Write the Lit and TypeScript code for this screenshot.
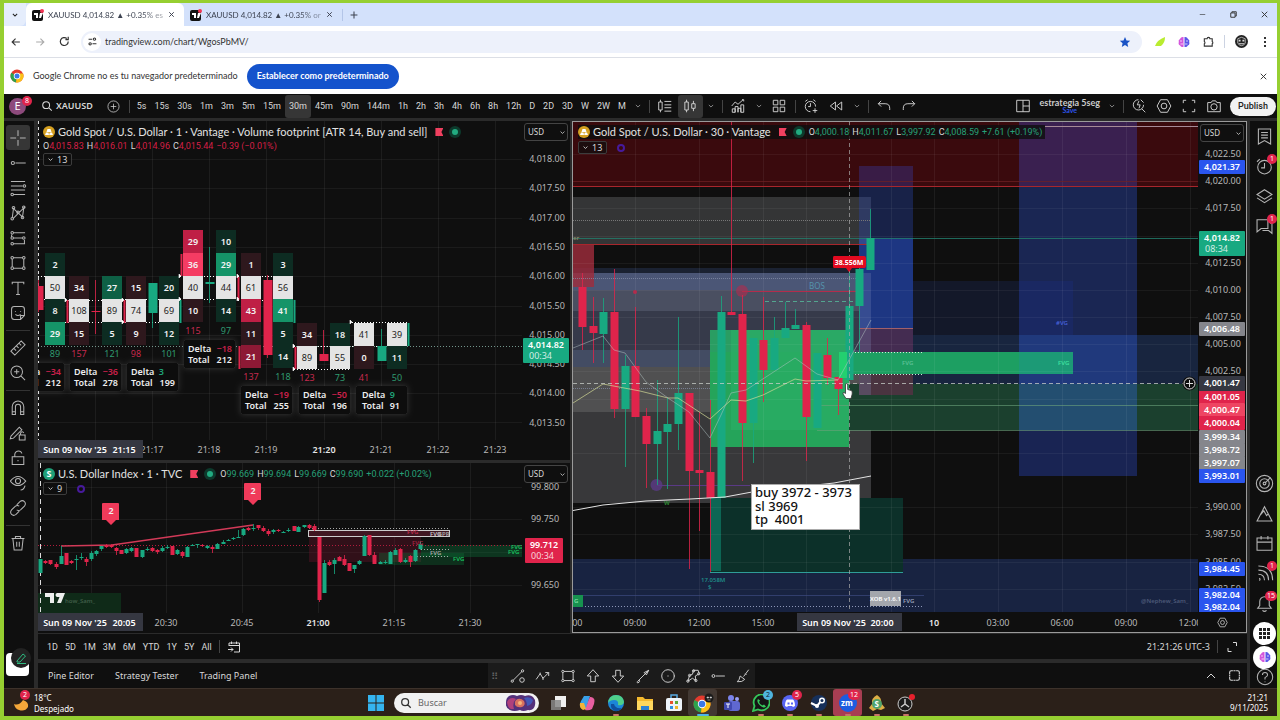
import { LitElement, html, svg, css } from "lit";
import { customElement, state } from "lit/decorators.js";
import { classMap } from "lit/directives/class-map.js";

/* ---------- icons, drawn on a 28-unit grid ---------- */
const P: Record<string, string> = {
  down: "M8 11l6 6 6-6",
  up: "M6 18l8-8 8 8",
  close: "M7 7l14 14M21 7L7 21",
  plus: "M14 6v16M6 14h16",
  back: "M23 14H6M13 6l-8 8 8 8",
  forward: "M5 14h17M15 6l8 8-8 8",
  reload: "M22 14a8.5 8.5 0 1 1-3-6.400M22 4v6h-6",
  tune: "M4 8h9M19 5a3 3 0 1 1 0 6a3 3 0 1 1 0-6M8 17a3 3 0 1 1 0 6a3 3 0 1 1 0-6M14 20h10",
  minimise: "M7 14h14",
  restore: "M7 10h11v11H7zM10 10V7h11v11h-3",
  puzzle: "M5 8h6a3 3 0 0 1 6 0h5v6a3 3 0 0 1 0 5v5H5v-5a3 3 0 0 0 0-5z",
  search: "M12 4a8 8 0 1 1 0 16a8 8 0 1 1 0-16M18 18l7 7",
  addcircle: "M14 2a12 12 0 1 1 0 24a12 12 0 1 1 0-24M14 8v12M8 14h12",
  footprint: "M6 3v4M6 21v4M3 7h6v14H3zM13 6h12M13 12h12M13 17h12M13 23h12",
  candles: "M8 3v4M8 21v4M5 7h6v14H5zM20 5v5M20 18v5M17 10h6v8h-6z",
  indicators: "M3 14l6-7 5 4 9-8M4 25v-6h5v6zM9 25V15h5v10M14 25v-7h5v7M19 25V12h5v13zM21 3h3v3",
  grid: "M4 4h8v8H4zM16 4h8v8h-8zM4 16h8v8H4zM16 16h8v8h-8z",
  alert: "M22 15a9 9 0 1 0-9 9M13 9v6H9M4 6l4-3M22 6l-4-3M21 18v8M17 22h8",
  replay: "M13 7v14L4 14zM24 7v14l-9-7z",
  undo: "M9 5l-5 5 5 5M4 10h12q8 0 8 8v3",
  redo: "M19 5l5 5-5 5M24 10H12q-8 0-8 8v3",
  layout: "M3 4h22v20H3zM14 4v20M14 14h11",
  quick: "M22 12a9 9 0 1 1-9-9M19 19l6 6M14 5l-3 7h5l-2 6M17 3l5 5",
  settings: "M8 3h12l6 11-6 11H8L2 14zM14 9a5 5 0 1 1 0 10a5 5 0 1 1 0-10",
  full: "M4 9V4h5M19 4h5v5M24 19v5h-5M9 24H4v-5",
  camera: "M3 8h6l2-3h6l2 3h6v16H3zM14 10a5.500 5.500 0 1 1 0 11a5.500 5.500 0 1 1 0-11",
  cross: "M14 2v9M14 17v9M2 14h9M17 14h9",
  trend: "M10 14h16M6 11.500a2.500 2.500 0 1 1 0 5a2.500 2.500 0 1 1 0-5",
  fib: "M3 4h22M3 11h18M3 17h22M7 24h18M24 9a2 2 0 1 1 0 4a2 2 0 1 1 0-4M5 22a2 2 0 1 1 0 4a2 2 0 1 1 0-4",
  pattern: "M5 22L7 7l14 13 2-14-16 16M7 4a2 2 0 1 1 0 4a2 2 0 1 1 0-4M23 3a2 2 0 1 1 0 4a2 2 0 1 1 0-4M5 21a2 2 0 1 1 0 4a2 2 0 1 1 0-4M21 19a2 2 0 1 1 0 4a2 2 0 1 1 0-4M14 11a2 2 0 1 1 0 4a2 2 0 1 1 0-4",
  position: "M7 6h18M7 14h14M7 23h18M5 4a2 2 0 1 1 0 4a2 2 0 1 1 0-4M5 12a2 2 0 1 1 0 4a2 2 0 1 1 0-4M23 12a2 2 0 1 1 0 4a2 2 0 1 1 0-4M5 21a2 2 0 1 1 0 4a2 2 0 1 1 0-4M4 9v3M24 17v5",
  rect: "M7 6h14M7 22h14M5 8v12M23 8v12M5 4a2 2 0 1 1 0 4a2 2 0 1 1 0-4M23 4a2 2 0 1 1 0 4a2 2 0 1 1 0-4M5 20a2 2 0 1 1 0 4a2 2 0 1 1 0-4M23 20a2 2 0 1 1 0 4a2 2 0 1 1 0-4",
  text: "M5 8V5h18v3M14 5v19M11 24h6",
  sticker: "M8 4h12q4 0 4 4v10l-6 6H8q-4 0-4-4V8q0-4 4-4zM24 18h-6v6M10 11v1M18 11v1M10 16q4 4 8 0",
  ruler: "M3 19L19 3l6 6L9 25zM8 15l3 3M12 11l3 3M16 7l3 3",
  zoomin: "M12 3a9 9 0 1 1 0 18a9 9 0 1 1 0-18M18 18l7 7M12 8v8M8 12h8",
  magnet: "M5 24V12a9 9 0 0 1 18 0v12h-5V12a4 4 0 0 0-8 0v12zM5 20h5M18 20h5",
  penlock: "M3 19L16 5l4 4L7 22l-5 1zM16 17h9v8h-9zM18 17v-3q3-4 5 0",
  lock: "M5 12h18v12H5zM9 12V8q1-5 6-5 4 0 5 4M14 17v2",
  eye: "M2 11q12-14 24 0q-12 14-24 0M14 7a4 4 0 1 1 0 8a4 4 0 1 1 0-8M18 25q5 0 7-7",
  link: "M12 9l5-5q4-3 7 0t0 7l-6 6q-3 2-6 0M16 19l-5 5q-4 3-7 0t0-7l6-6q3-2 6 0",
  trash: "M4 7h20M10 7V4h8v3M6 7l2 18h12l2-18M12 12v8M16 12v8",
  list: "M5 3h18v22l-9-5-9 5zM9 8h10M9 12h10M9 16h10",
  clock: "M14 5a10 10 0 1 1 0 20a10 10 0 1 1 0-20M14 9v7H9M3 7l4-4M25 7l-4-4",
  layers: "M14 4l11 7-11 7-11-7zM3 16l11 7 11-7",
  chat: "M3 4h16v13H9l-6 5zM22 9h3v15l-5-4h-9",
  target: "M14 2a12 12 0 1 1 0 24a12 12 0 1 1 0-24M14 7a7 7 0 1 1 0 14a7 7 0 1 1 0-14M14 12a2 2 0 1 1 0 4a2 2 0 1 1 0-4M15 13l7-7",
  ideas: "M3 25l11-21 11 21zM8 16l5-6 4 7 3-3M3 25h22",
  calendar: "M3 6h22v18H3zM3 12h22M9 3v5M19 3v5",
  feed: "M6 21a1.500 1.500 0 1 1 0 3M5 15q9 0 9 9M5 9q15 0 15 15M5 3q21 0 21 21",
  bell: "M4 21h20l-3-4v-6a7 7 0 0 0-14 0v6zM11 24q3 3 6 0",
  goto: "M4 12V6h21v18H14M4 11h21M9 3v5M19 3v5M2 19h10M8 15l4 4-4 4",
  corners: "M6 16v7h7M16 5h7v7",
  brush: "M24 3l-9 12M18 10l2 2M9 14l8 6q-4 5-13 4 4-3 5-10z",
  lineshape: "M5 22L21 6M4 21a2 2 0 1 1 0 4a2 2 0 1 1 0-4M22 3a2 2 0 1 1 0 4a2 2 0 1 1 0-4M21 17a4 4 0 1 1 0 8a4 4 0 1 1 0-8",
  zigzag: "M2 20l7-10 5 8 10-10M18 8h6v6M9 8v4M14 16v5",
  arrowup: "M14 3l10 11h-6v10h-8V14H4z",
  arrowdown: "M14 25L4 14h6V4h8v10h6z",
  arrow: "M4 24L24 4M16 8l8-4-4 8zM7 21a2 2 0 1 1-4 4",
  circle: "M14 3a11 11 0 1 1 0 22a11 11 0 1 1 0-22M14 13v2M25 13v2",
  poly: "M5 23l3-10 5-2 2-7h8l2 6-7 4 1 8-6-4zM5 21a2 2 0 1 1 0 4a2 2 0 1 1 0-4M8 11a2 2 0 1 1 0 4a2 2 0 1 1 0-4M15 3a2 2 0 1 1 0 4a2 2 0 1 1 0-4M24 8a2 2 0 1 1 0 4a2 2 0 1 1 0-4M19 20a2 2 0 1 1 0 4a2 2 0 1 1 0-4",
  square: "M11 5H8q-3 0-3 3v3M17 5h3q3 0 3 3v3M23 17v3q0 3-3 3h-3M11 23H8q-3 0-3-3v-3M5 12v4M23 12v4M12 5h4M12 23h4",
  help: "M14 2a12 12 0 1 1 0 24a12 12 0 1 1 0-24M10 11q0-4 4-4t4 4q0 2-4 4v3M14 21v1",
};
const icon = (name: string, size = 18, w = 1.6) => html`<svg class="ico" width=${size} height=${size} viewBox="0 0 28 28" fill="none" stroke="currentColor" stroke-width=${w} aria-hidden="true"><path d=${P[name]}></path></svg>`;

const tvLogo = html`<svg width="12" height="12" viewBox="0 0 12 12" aria-hidden="true"><rect width="11" height="11" y="1" rx="2" fill="#111"></rect><path d="M2 4h4v5H4V6H2zM8 4h3L9 9H7z" fill="#fff"></path><circle cx="10" cy="2" r="2" fill="#f23655"></circle></svg>`;
const chromeLogo = (s: number) => html`<svg width=${s} height=${s} viewBox="0 0 28 28" aria-hidden="true"><circle cx="14" cy="14" r="13" fill="#e33b2e"></circle><path d="M14 14L2.700 7.500A13 13 0 0 0 12 26.800z" fill="#2da14c"></path><path d="M14 14l-2 12.800A13 13 0 0 0 26 9H14z" fill="#fbc116"></path><circle cx="14" cy="14" r="6.500" fill="#fff"></circle><circle cx="14" cy="14" r="5" fill="#3b78e7"></circle></svg>`;
const brain = html`<svg width="12" height="12" viewBox="0 0 12 12" aria-hidden="true"><path d="M5.500 1v10Q3 11.500 2.200 9.500 0 8.500.8 6 0 4 2 3 3 .5 5.500 1z" fill="#d455dc"></path><path d="M6.500 1v10Q9 11.500 9.800 9.500 12 8.500 11.200 6 12 4 10 3 9 .5 6.500 1z" fill="#5b55e8"></path><path d="M2 5h2M8 5h2M2.500 8H5M7 8h2.500" stroke="#fff" stroke-width=".7"></path></svg>`;

/* ---------- chart data ---------- */
type Candle = [number, number, number, number, number, 0 | 1]; // x, high, bodyTop, bodyBottom, low, rising
const GREEN = "#18a981", RED = "#e0244b";

const goldCandles: Candle[] = [
  [582, 273, 287, 327, 350, 0], [593, 297, 326, 333, 363, 0], [603, 298, 312, 334, 363, 1], [614, 269, 312, 409, 418, 0],
  [625, 355, 366, 409, 467, 1], [635, 307, 366, 417, 417, 0], [646, 408, 416, 444, 488, 0], [657, 380, 431, 444, 485, 1],
  [667, 398, 424, 432, 489, 1], [678, 317, 393, 424, 450, 1], [689, 393, 393, 471, 569, 0], [699, 412, 470, 473, 531, 0],
  [710, 400, 472, 498, 572, 0], [721, 296, 312, 498, 498, 1], [731, 121, 312, 315, 315, 0], [742, 295, 314, 423, 481, 0],
  [753, 338, 338, 423, 463, 1], [763, 297, 340, 370, 402, 0], [774, 317, 338, 370, 370, 1], [785, 302, 328, 338, 338, 1],
  [795, 309, 325, 329, 329, 1], [806, 322, 325, 417, 461, 0], [817, 353, 353, 428, 428, 1], [827, 338, 355, 378, 385, 0],
  [838, 377, 377, 389, 415, 0], [849, 268, 306, 380, 380, 1], [859, 265, 269, 306, 352, 1], [870, 209, 238, 270, 270, 1],
];
const dxyCandles: Candle[] = [
  [40, 559, 559, 573, 573, 1], [45, 560, 561, 563, 564, 0], [50, 560, 560, 564, 565, 0], [56, 562, 564, 567, 569, 0],
  [61, 546, 556, 564, 564, 1], [66, 553, 553, 565, 565, 0], [71, 560, 561, 563, 564, 0], [76, 555, 559, 560, 570, 1],
  [81, 553, 557, 558, 560, 1], [86, 557, 559, 562, 566, 0], [91, 551, 553, 559, 561, 1], [96, 550, 551, 554, 556, 1],
  [101, 546, 546, 549, 551, 1], [106, 544, 545, 547, 548, 0], [111, 544, 545, 547, 548, 0], [116, 547, 548, 551, 555, 0],
  [121, 550, 550, 554, 554, 0], [126, 548, 549, 553, 554, 1], [131, 547, 548, 551, 552, 1], [136, 548, 548, 557, 557, 0],
  [142, 550, 550, 557, 558, 1], [147, 547, 549, 550, 551, 1], [152, 547, 548, 551, 552, 0], [157, 549, 550, 552, 554, 0],
  [162, 546, 548, 551, 552, 1], [167, 545, 547, 548, 549, 1], [172, 546, 546, 555, 555, 0], [177, 549, 550, 554, 555, 1],
  [182, 551, 552, 556, 558, 0], [187, 546, 547, 557, 557, 1], [192, 544, 545, 546, 546, 1], [197, 544, 544, 545, 548, 1],
  [202, 544, 545, 546, 547, 0], [207, 545, 546, 548, 549, 1], [212, 546, 547, 549, 553, 0], [217, 543, 544, 549, 549, 1],
  [223, 540, 542, 544, 544, 1], [228, 539, 540, 541, 541, 1], [233, 537, 538, 539, 540, 1], [238, 530, 537, 538, 538, 1],
  [243, 528, 529, 535, 536, 1], [248, 527, 528, 530, 531, 0], [253, 524, 528, 529, 531, 1], [258, 525, 525, 528, 530, 0],
  [263, 526, 528, 531, 532, 0], [268, 529, 531, 534, 536, 0], [273, 529, 530, 532, 534, 1], [278, 529, 530, 531, 532, 0],
  [283, 531, 532, 533, 533, 1], [288, 528, 530, 531, 532, 1], [294, 526, 526, 531, 531, 0], [298, 526, 527, 532, 532, 1],
  [304, 525, 525, 527, 528, 1], [309, 524, 525, 528, 529, 0], [314, 524, 526, 530, 531, 0], [319, 537, 537, 600, 602, 0],
  [324, 560, 563, 593, 593, 1], [329, 560, 562, 565, 566, 0], [334, 558, 560, 564, 574, 1], [339, 556, 557, 561, 561, 0],
  [344, 555, 559, 565, 566, 0], [349, 563, 563, 571, 571, 0], [354, 565, 565, 569, 573, 1], [359, 560, 561, 564, 565, 1],
  [364, 535, 536, 556, 556, 1], [369, 535, 535, 555, 556, 0], [374, 552, 555, 564, 564, 0], [380, 561, 562, 564, 564, 1],
  [385, 560, 562, 563, 564, 1], [390, 551, 552, 564, 564, 1], [395, 548, 550, 555, 555, 1], [400, 548, 549, 562, 563, 0],
  [405, 558, 560, 562, 563, 1], [410, 555, 556, 562, 567, 0], [415, 549, 550, 561, 562, 1], [420, 541, 544, 549, 550, 1],
];
const candle = (w: number) => ([x, hi, top, bottom, lo, rise]: Candle) => {
  const c = rise ? GREEN : RED;
  return svg`<path d="M${x + 0.5} ${hi}V${lo}" stroke=${c} stroke-opacity=".8"></path><rect x=${x - Math.floor(w / 2) + 0.5} y=${top} width=${w} height=${Math.max(1, bottom - top)} fill=${c}></rect>`;
};

const ROW = 23;
type Col = { x: number; y: number; cells: [number, string][]; sum: number; side: "s" | "b" };
const cols: Col[] = [
  { x: 45, y: 253, side: "b", sum: 89, cells: [[2, "g0"], [50, "w"], [8, "g0"], [29, "g2"]] },
  { x: 69, y: 276, side: "s", sum: 157, cells: [[34, "r0"], [108, "w"], [15, "r0"]] },
  { x: 102, y: 276, side: "b", sum: 121, cells: [[27, "g1"], [89, "w"], [5, "g0"]] },
  { x: 126, y: 276, side: "s", sum: 98, cells: [[15, "r0"], [74, "w"], [9, "r0"]] },
  { x: 159, y: 276, side: "b", sum: 101, cells: [[20, "g0"], [69, "w"], [12, "g0"]] },
  { x: 183, y: 230, side: "s", sum: 115, cells: [[29, "r2"], [36, "r3"], [40, "w"], [10, "r0"]] },
  { x: 216, y: 230, side: "b", sum: 97, cells: [[10, "g0"], [29, "g2"], [44, "w"], [14, "g0"]] },
  { x: 241, y: 253, side: "s", sum: 137, cells: [[1, "r0"], [61, "w"], [43, "r2"], [11, "r0"], [21, "r1"]] },
  { x: 273, y: 253, side: "b", sum: 118, cells: [[3, "g0"], [56, "w"], [41, "g2"], [5, "g0"], [14, "g0"]] },
  { x: 297, y: 323, side: "s", sum: 123, cells: [[34, "r0"], [89, "w"]] },
  { x: 330, y: 323, side: "b", sum: 73, cells: [[18, "g0"], [55, "w"]] },
  { x: 354, y: 323, side: "s", sum: 41, cells: [[41, "w"], [0, "r0"]] },
  { x: 387, y: 323, side: "b", sum: 50, cells: [[39, "w"], [11, "g0"]] },
];
const tone: Record<string, string> = { g0: "#0d2c22", g1: "#0e6045", g2: "#159468", r0: "#2e181d", r1: "#8d1935", r2: "#bf1f45", r3: "#f53c63", w: "#e4e4e4" };
const midCandles: Candle[] = [[38, 280, 286, 310, 312, 0], [95, 280, 311, 312, 334, 0], [152, 283, 283, 313, 328, 1], [209, 247, 282, 284, 303, 1], [267, 275, 280, 355, 358, 0], [323, 330, 354, 361, 361, 0], [381, 329, 346, 361, 361, 1]];
// box x, box y, delta, total, label inset, delta right edge, total right edge
const deltas: [number, number, number, number, number, number, number][] = [
  [13, 363, -34, 212, 4, 48, 48], [70, 363, -36, 278, 4, 48, 48], [127, 363, 3, 199, 4, 37, 48], [184, 340, -18, 212, 4, 48, 48],
  [241, 386, -19, 255, 4, 48, 48], [299, 386, -50, 196, 4, 48, 48], [356, 386, 9, 91, 6, 39, 44],
];

const vlines = (xs: number[], y1: number, y2: number) => xs.map((x) => svg`<path d="M${x + 0.5} ${y1}V${y2}" stroke="#fff" stroke-opacity=".06"></path>`);
const hlines = (ys: number[], x1: number, x2: number) => ys.map((y) => svg`<path d="M${x1} ${y + 0.5}H${x2}" stroke="#fff" stroke-opacity=".05"></path>`);
const box = (x: number, y: number, x2: number, y2: number, fill: string, o = 1) => svg`<rect x=${x} y=${y} width=${x2 - x} height=${y2 - y} fill=${fill} fill-opacity=${o}></rect>`;
const fvg = (x: number, y: number, c: string, s = "FVG") => svg`<text class="tiny" x=${x} y=${y} fill=${c}>${s}</text>`;
const tick = (x: number, y: number, s: string, bold = false) => svg`<text class=${bold ? "tick bold" : "tick"} x=${x} y=${y + 3}>${s}</text>`;
const tag = (x: number, y: number, w: number, h: number, fill: string, s: string, s2?: string) => svg`<rect x=${x} y=${y} width=${w} height=${h} rx="1" fill=${fill}></rect><text class="tag" x=${x + w / 2} y=${y + 10}>${s}</text>${s2 ? svg`<text class="tagsub" x=${x + 6} y=${y + 21}>${s2}</text>` : ""}`;

const intervals = ["5s", "15s", "30s", "1m", "3m", "5m", "15m", "30m", "45m", "90m", "144m", "1h", "2h", "3h", "4h", "6h", "8h", "12h", "D", "2D", "3D", "W", "2W", "M"];
const ranges = ["1D", "5D", "1M", "3M", "6M", "YTD", "1Y", "5Y", "All"];

@customElement("app-root")
export class AppRoot extends LitElement {
  @state() private interval = "30m";

  static styles = css`
    :host { display: block; box-sizing: border-box; height: 100vh; min-height: 600px; overflow: hidden; padding: 3px 3px 4px 4px; background: #96cf31; font: 9px/12px "Noto Sans", "Open Sans", sans-serif; color: #d8d8d8; }
    * { box-sizing: border-box; }
    button, input, select { font: inherit; color: inherit; background: none; border: 0; margin: 0; padding: 0; }
    button { display: inline-flex; align-items: center; justify-content: center; white-space: nowrap; }
    svg { display: block; flex: none; }
    .window { display: flex; flex-direction: column; height: 100%; }
    .grow { flex: 1; }

    .tabs { display: flex; align-items: center; height: 23px; flex: none; background: #d3e1fb; color: #3c4250; font-family: Lato, "Open Sans", sans-serif; }
    .tabmenu { width: 22px; height: 23px; border-radius: 0 0 6px 0; background: #e5edfc; color: #222; }
    .tab { display: flex; align-items: center; gap: 4px; width: 158px; height: 23px; padding: 0 8px 0 6px; border-radius: 6px 6px 0 0; font-size: 8px; }
    .tab.on { background: #fff; }
    .tab span { flex: 1; overflow: hidden; white-space: nowrap; mask-image: linear-gradient(90deg, #000 80%, #0006); }
    .newtab { width: 22px; border-left: 1px solid #b3c5e8; height: 12px; }
    .winbtns { display: flex; gap: 14px; padding-right: 4px; }
    .winbtns button { width: 17px; color: #333; }

    .nav { display: flex; align-items: center; height: 32px; flex: none; background: #fff; border-bottom: 1px solid #dcdfe6; color: #333; font-family: Lato, "Open Sans", sans-serif; }
    .nav > button { width: 24px; }
    .nav .dim { color: #aaa; }
    .nav .sep { background: #ccd3e2; margin: 0 4px; }
    .address { display: flex; align-items: center; flex: 1; height: 22px; margin: 0 6px 0 5px; border-radius: 11px; background: #edf1fb; }
    .site { width: 18px; height: 18px; margin: 0 4px 0 2px; border-radius: 9px; background: #fff; }
    .address input { flex: 1; font-size: 9px; color: #333; outline: 0; }
    .address .star { width: 34px; color: #1a53c5; }
    .face { width: 13px; height: 13px; border-radius: 7px; background: #222; color: #ddd; }

    .info { display: flex; align-items: center; height: 36px; flex: none; background: #fff; color: #333; padding: 0 8px 0 6px; gap: 9px; font-family: Lato, "Open Sans", sans-serif; }
    .info .set { height: 25px; padding: 0 10px; border-radius: 13px; background: #1453cc; color: #fff; font-weight: 700; }

    .top { display: flex; align-items: center; height: 24px; flex: none; background: #0f0f0f; padding-left: 5px; }
    .avatar { position: relative; width: 17px; height: 17px; border-radius: 9px; background: #8d4a7c; color: #fff; font-size: 11px; }
    .badge { position: absolute; top: -5px; right: -6px; min-width: 10px; height: 10px; padding: 0 2px; border-radius: 5px; background: #e0244b; color: #fff; font: 7px/10px "Noto Sans", sans-serif; text-align: center; }
    .avatar .badge { top: -2px; }
    .symbol { gap: 3px; margin: 0 8px 0 15px; font-weight: 600; }
    .top .sep { margin: 0 3px; }
    .sep { width: 1px; height: 13px; background: #444; flex: none; }
    .times { display: flex; font-family: Roboto, sans-serif; }
    .times button { height: 23px; padding: 0 4px; border-radius: 3px; }
    .times .on { background: #363636; }
    .top .t { width: 25px; height: 23px; border-radius: 3px; }
    .top .t.on { background: #363636; }
    .top .c { width: 16px; color: #999; }
    .name { display: flex; flex-direction: column; align-items: center; margin: 0 4px; font: 700 9px/9px Lato, sans-serif; color: #ccc; }
    .name small { color: #2e54e8; font-size: 7px; line-height: 7px; }
    .publish { height: 19px; margin: 0 1px 0 3px; padding: 0 8px; border-radius: 10px; background: #f2f2f2; color: #222; font: 500 9px/12px Roboto, sans-serif; }

    .main { display: grid; grid-template-columns: 30px minmax(0, 1fr) 27px; gap: 0 4px; flex: 1; min-height: 0; padding-top: 3px; background: #2b2b2b; }
    .rail { display: flex; flex-direction: column; align-items: center; background: #0f0f0f; min-height: 0; }
    .left { padding: 4px 3px 0 0; color: #b4b4b4; }
    .left > button { width: 24px; height: 25px; flex: none; border-radius: 3px; }
    .left > .on { background: #363636; }
    .rule { display: flex; align-items: center; height: 10px; width: 24px; flex: none; }
    .rule::before { content: ""; width: 100%; height: 1px; background: #333; }
    .note { position: relative; width: 23px; height: 23px; margin-bottom: 12px; border-radius: 4px; background: #fff; }
    .note span { position: absolute; left: 5px; top: -5px; width: 20px; height: 20px; border-radius: 10px; background: #222; color: #2eb980; display: grid; place-items: center; }
    .right { color: #b4b4b4; padding-left: 2px; }
    .right > button { position: relative; width: 25px; height: 30px; flex: none; }
    .right .badge { top: 3px; right: 0; }
    .right > .apps { height: 30px; z-index: 1; }
    .right > .mind { height: 18px; z-index: 1; }
    .right > .helpbtn { height: 22px; }
    .disc { display: grid; place-items: center; flex: none; width: 23px; height: 23px; border-radius: 12px; background: #fff; color: #222; }

    .centre { display: flex; flex-direction: column; min-height: 0; margin-right: -1px; }
    .charts { display: grid; grid-template-columns: minmax(0, 532fr) minmax(0, 675fr); gap: 2px; flex: 1; min-height: 0; }
    .stack { display: grid; grid-template-rows: minmax(0, 339fr) minmax(0, 170fr); gap: 3px; }
    .pane { position: relative; display: grid; grid-template-columns: minmax(0, 1fr) 48px; grid-template-rows: minmax(0, 1fr) 20px; background: #0f0f0f; overflow: hidden; min-height: 0; }
    .pane.active { border: 1px solid #9a9a9a; }
    .pane > svg { width: 100%; height: 100%; overflow: hidden; }
    .gear { display: grid; place-items: center; color: #bbb; }
    .legend { position: absolute; left: 5px; top: 4px; display: flex; flex-direction: column; align-items: flex-start; gap: 1px; }
    .head { display: flex; align-items: center; height: 14px; gap: 3px; white-space: nowrap; }
    .active .legend { top: 3px; gap: 2px; }
    .active .head { background: #0f0f0fd0; }
    .title { font: 11px/14px Lato, "Open Sans", sans-serif; color: #e2e2e2; }
    .coin { width: 12px; height: 12px; border-radius: 6px; background: #d5a021; color: #fff; font: 700 9px/12px "Noto Sans", sans-serif; display: grid; place-items: center; }
    .coin.usd { background: #1f9f78; }
    .flag { width: 8px; height: 8px; margin: 0 5px; background: #f0405f; clip-path: polygon(0 0, 100% 0, 75% 50%, 100% 100%, 0 100%); }
    .live { width: 6px; height: 6px; margin: 0 4px 0 1px; border-radius: 3px; background: #22ab80; box-shadow: 0 0 0 3px #0d3a2c; }
    .ohlc { white-space: nowrap; font-family: Roboto, sans-serif; line-height: 12px; }
    .ohlc i { font-style: normal; color: #d41f46; margin-right: 3px; }
    .ohlc .g { color: #26a077; }
    .chips { display: flex; align-items: center; gap: 10px; }
    .chip { height: 13px; padding: 0 4px 0 2px; gap: 2px; border: 1px solid #3c3c3c; border-radius: 2px; background: #0f0f0fb0; }
    .ring { width: 8px; height: 8px; border: 2px solid #471a9c; border-radius: 4px; }
    .cur { position: absolute; right: 2px; top: 2px; width: 44px; height: 18px; border: 1px solid #444; border-radius: 3px; background: #0f0f0f; appearance: none; padding: 0 3px; font-size: 8px; }
    .curarrow { position: absolute; right: 3px; top: 7px; pointer-events: none; }

    .tick { font-size: 9px; fill: #b8b8b8; text-anchor: middle; }
    .tick.bold, .tag { font-weight: 600; fill: #e6e6e6; }
    .tag { font-size: 9px; fill: #fff; text-anchor: middle; }
    .tagsub { font-size: 9px; fill: #ffffffd0; }
    .cell { font-size: 9px; font-weight: 600; fill: #f2f2f2; text-anchor: middle; }
    .cell.dark { fill: #222; font-weight: 400; }
    .sum { font-size: 9px; text-anchor: middle; }
    .dl { font-size: 9px; font-weight: 600; fill: #eee; }
    .dl.e { text-anchor: end; }
    .dl.neg { fill: #c9204a; }
    .dl.pos { fill: #1fa377; }
    .tiny { font-size: 6px; font-weight: 600; }
    .bos { font-size: 8px; fill: #5593ac; }
    .sig { font-size: 7px; font-weight: 700; fill: #fff; text-anchor: middle; }
    .memo { font-size: 13px; font-weight: 500; fill: #111; white-space: pre; }

    .ranges, .panels { display: flex; align-items: center; flex: none; background: #0f0f0f; }
    .ranges { height: 25px; margin-top: 1px; padding: 0 8px 0 9px; gap: 7px; font-family: Roboto, sans-serif; }
    .ranges .utc { font-family: "Noto Sans", sans-serif; }
    .panels { height: 25px; margin-top: 4px; padding: 0 5px 0 10px; gap: 21px; }
    .shapes { display: flex; height: 25px; padding-left: 3px; background: #1b1b1b; align-items: center; flex: none; }
    .shapes button { width: 25px; }
    .shapes .grip { width: 14px; color: #666; font-size: 10px; }
    .drawer { margin-left: 210px; }
    .panels .ends { display: flex; gap: 9px; }

    .task { display: grid; grid-template-columns: 1fr auto 1fr; align-items: center; height: 28px; flex: none; background: #2b2019; color: #fff; border-top: 1px solid #3d322b; }
    .weather { display: flex; align-items: center; gap: 3px; padding-left: 9px; font-size: 8px; line-height: 11px; }
    .moon { position: relative; }
    .weather .badge { top: -4px; right: 1px; }
    .icons { display: flex; align-items: center; height: 27px; }
    .icons > button { position: relative; width: 29px; height: 27px; font-weight: 700; }
    .icons > .hot { background: #a83e52; border-radius: 3px; }
    .icons > .lit { background: #423832; border-radius: 3px; }
    .icons .run::after { content: ""; position: absolute; bottom: 0; width: 6px; height: 2px; border-radius: 1px; background: #c9746a; }
    .icons .lit::after { width: 12px; background: #4cb5ea; }
    .icons .badge { top: 1px; right: 2px; }
    .icons .badge.cyan { background: #4fb4de; color: #123; }
    .find { display: flex; align-items: center; gap: 6px; width: 145px; height: 20px; margin: 0 4px; padding: 0 3px 0 6px; border-radius: 10px; background: #f1f1f1; color: #333; }
    .find input { width: 82px; font-size: 9px; color: #666; }
    .find input::placeholder { color: #666; }
    .date { padding-right: 9px; text-align: right; font-size: 8px; line-height: 10px; }
  `;

  private chrome() {
    return html`
      <div class="tabs">
        <button class="tabmenu" aria-label="Buscar pestañas">${icon("down", 10, 3)}</button>
        <div class="tab on">${tvLogo}<span>XAUUSD 4,014.82 ▲ +0.35% es</span><button aria-label="Cerrar">${icon("close", 9, 3)}</button></div>
        <div class="tab">${tvLogo}<span>XAUUSD 4,014.82 ▲ +0.35% or</span><button aria-label="Cerrar">${icon("close", 9, 3)}</button></div>
        <button class="newtab" aria-label="Nueva pestaña">${icon("plus", 12, 2.4)}</button>
        <div class="grow"></div>
        <div class="winbtns"><button aria-label="Minimizar">${icon("minimise", 11)}</button><button aria-label="Restaurar">${icon("restore", 11, 2.4)}</button><button aria-label="Cerrar ventana">${icon("close", 11, 2.4)}</button></div>
      </div>
      <div class="nav">
        <button aria-label="Atrás">${icon("back", 12, 2.6)}</button><button class="dim" aria-label="Adelante">${icon("forward", 12, 2.6)}</button><button aria-label="Recargar">${icon("reload", 13, 2.6)}</button>
        <div class="address">
          <button class="site" aria-label="Información del sitio">${icon("tune", 11, 2.6)}</button>
          <input aria-label="Dirección" .value=${"tradingview.com/chart/WgosPbMV/"} />
          <button class="star" aria-label="Marcador"><svg width="12" height="12" viewBox="0 0 12 12"><path d="M6 1l1.500 3.400 3.700.4-2.800 2.500.8 3.700L6 9.100 2.800 11l.8-3.700L.8 4.800l3.700-.4z" fill="currentColor"></path></svg></button>
        </div>
        <button aria-label="Extensión"><svg width="12" height="12" viewBox="0 0 12 12"><path d="M1 10Q3 4 11 1 11 7 7 10z" fill="#b9ec2f"></path></svg></button>
        <button aria-label="Asistente">${brain}</button>
        <button aria-label="Extensiones">${icon("puzzle", 13, 2.4)}</button>
        <span class="sep"></span>
        <button aria-label="Perfil"><svg class="face" viewBox="0 0 14 14"><path d="M4 5h2v2H4zM8 5h2v2H8zM4 9h6v1H4z" fill="currentColor"></path><path d="M3 4q4-3 8 0v5q-4 5-8 0z" fill="none" stroke="currentColor" stroke-width=".8"></path></svg></button>
        <button aria-label="Menú"><svg width="4" height="14" viewBox="0 0 4 14"><path d="M1 2h2v2H1zM1 6h2v2H1zM1 10h2v2H1z" fill="#333"></path></svg></button>
      </div>
      <div class="info">
        ${chromeLogo(14)}<span>Google Chrome no es tu navegador predeterminado</span>
        <button class="set">Establecer como predeterminado</button>
        <div class="grow"></div><button aria-label="Cerrar aviso">${icon("close", 11, 2.4)}</button>
      </div>`;
  }

  private topbar() {
    const t = (n: string, label: string, on = false, size = 16) => html`<button class=${classMap({ t: true, on })} aria-label=${label}>${icon(n, size)}</button>`;
    const c = html`<button class="c" aria-label="More">${icon("down", 10, 2.4)}</button>`;
    return html`<div class="top">
      <button class="avatar" aria-label="Account">E<span class="badge">8</span></button>
      <button class="symbol">${icon("search", 12, 2.4)}XAUUSD</button>
      ${t("addcircle", "Compare", false, 13)}
      <span class="sep"></span>
      <div class="times">${intervals.map((i) => html`<button class=${classMap({ on: i === this.interval })} @click=${() => (this.interval = i)}>${i}</button>`)}</div>
      ${c}<span class="sep"></span>
      ${t("footprint", "Footprint")}${t("candles", "Candles", true)}${c}<span class="sep"></span>
      ${t("indicators", "Indicators")}${c}${t("grid", "Templates")}<span class="sep"></span>
      ${t("alert", "Alert")}${t("replay", "Replay")}${c}<span class="sep"></span>
      ${t("undo", "Undo")}${t("redo", "Redo")}
      <div class="grow"></div>
      ${t("layout", "Layout")}<button class="name">estrategia 5seg<small>Save</small></button>${c}<span class="sep"></span>
      ${t("quick", "Quick search")}${t("settings", "Settings")}${t("full", "Fullscreen")}${t("camera", "Snapshot")}
      <button class="publish">Publish</button>
    </div>`;
  }

  private footprint() {
    return html`<section class="pane">
      <svg><g transform="translate(-38 -121)">
        ${vlines([95, 152, 209, 266, 324, 381, 438, 495], 121, 441)}${hlines([159, 188, 218, 247, 276, 306, 335, 364, 393, 422], 38, 522)}
        <path d="M38.500 121V441" stroke="#ddd" stroke-dasharray="3 3"></path>
        <path d="M38 346.500H522" stroke="#9ccfc0" stroke-opacity=".7" stroke-dasharray="1 2"></path>
        <defs><filter id="glow" x="-20%" y="-30%" width="140%" height="160%"><feDropShadow dx="0" dy="0" stdDeviation="3" flood-color="#fff" flood-opacity=".18"></feDropShadow></filter></defs>
        ${deltas.map(([x, y, d, tot, l, de, te]) => svg`<rect x=${x} y=${y} width="51" height="28" rx="1" fill="#0c0c0c" filter="url(#glow)"></rect>
          <text class="dl" x=${x + l} y=${y + 12}>Delta</text><text class=${d < 0 ? "dl e neg" : "dl e pos"} x=${x + de} y=${y + 12}>${d < 0 ? "−" + -d : d}</text>
          <text class="dl" x=${x + l} y=${y + 23}>Total</text><text class="dl e" x=${x + te} y=${y + 23}>${tot}</text>`)}
        <path d="M38 276.500H65M38 299.500H65M65 300.500H122M65 322.500H179M122 299.500H180M180 276.500H238M180 299.500H238M238 276.500H293M238 300.500H293M294 346.500H350M294 369.500H350M352 322.500H408M352 346.500H408" stroke="#fff" stroke-dasharray="1 2"></path>
        ${cols.map((c) => svg`${c.cells.map(([n, k], i) => svg`<rect x=${c.x} y=${c.y + i * ROW} width="20" height="23" fill=${tone[k]}></rect><text class=${k === "w" ? "cell dark" : "cell"} x=${c.x + 10} y=${c.y + i * ROW + 15}>${n}</text>`)}
          <text class="sum" x=${c.x + 10} y=${c.y + c.cells.length * ROW + 12} fill=${c.side === "s" ? "#c52a4e" : "#2f9a70"}>${c.sum}</text>`)}
        ${midCandles.map(candle(9))}
        <path d="M67.500 300V323M124.500 300V323M181.500 254V276M238.500 277V300M239.500 346V369M295.500 347V369" stroke="#e0244b" stroke-width="2"></path>
        <path d="M180.500 300V323M294.500 300V323M408.500 323V346" stroke="#18a981" stroke-width="2"></path>
        <path d="M65 298l2 2-2 2zM122 298l2 2-2 2zM122 320l2 2-2 2zM179 274l2 2-2 2zM179 297l2 2-2 2zM237 274l2 2-2 2zM237 297l2 2-2 2zM293 344l2 2-2 2zM293 367l2 2-2 2zM350 320l2 2-2 2z" fill="#fff" stroke="#fff" stroke-width=".6"></path>
      </g></svg>
      <svg><g transform="translate(-522 -121)">
        ${["18.00", "17.50", "17.00", "16.50", "16.00", "15.50", "15.00", "14.50", "14.00", "13.50"].map((s, i) => tick(547, 159 + Math.round(i * 29.3), "4,0" + s))}
        ${tag(523, 338, 46, 25, GREEN, "4,014.82", "00:34")}
      </g></svg>
      <svg><g transform="translate(-38 -440)">
        ${["21:17", "21:18", "21:19", "21:20", "21:21", "21:22", "21:23"].map((s, i) => tick(152 + Math.round(i * 57.2), 450, s, i === 3))}
        <rect x="38" y="440" width="105" height="18" fill="#353741"></rect><text class="tag" x="75" y="453">Sun 09 Nov '25</text><text class="tag" x="124" y="453">21:15</text>
      </g></svg>
      <div></div>
      <div class="legend">
        <div class="head"><span class="coin">${this.bars()}</span><span class="title">Gold Spot / U.S. Dollar · 1 · Vantage · Volume footprint [ATR 14, Buy and sell]</span><span class="flag"></span><span class="live"></span></div>
        <div class="ohlc">O<i>4,015.83</i>H<i>4,016.01</i>L<i>4,014.96</i>C<i>4,015.44</i><i>−0.39 (−0.01%)</i></div>
        <button class="chip">${icon("down", 9, 2.6)}13</button>
      </div>
      ${this.currency()}
    </section>`;
  }

  private bars() {
    return html`<svg width="8" height="6" viewBox="0 0 8 6"><path d="M2.500 0h3l1 3h-5zM0 6l1-2.500h2.500L4 6zM4.200 6l.5-2.500H7L8 6z" fill="#fff"></path></svg>`;
  }
  private currency() {
    return html`<select class="cur" aria-label="Currency"><option>USD</option></select><span class="curarrow">${icon("down", 9, 2.4)}</span>`;
  }

  private dxy() {
    return html`<section class="pane">
      <svg><g transform="translate(-38 -463)">
        ${vlines([91, 166, 242, 318, 394, 470], 463, 613)}${hlines([487, 519, 552, 585], 38, 522)}
        ${box(38, 593, 121, 613, "#0f2a18")}
        ${box(309, 537, 421, 562, "#7a1430", 0.32)}${box(379, 553, 464, 565, "#0c7a3c", 0.3)}${box(421, 545, 524, 557, "#0c7a3c", 0.36)}
        <rect x="308.500" y="530.500" width="141" height="6" fill="#401722" stroke="#ccc"></rect>
        <path d="M38 545.500H522" stroke="#b01c3c" stroke-dasharray="1 2"></path><path d="M309 528.500H449M421 549.500H449M417 556.500H449" stroke="#aaa" stroke-dasharray="1 2"></path>
        <path d="M40.500 463V613" stroke="#ddd" stroke-dasharray="5 4"></path>
        <path d="M61 546L112 545 253 525" stroke="#d23a58" fill="none" stroke-width="1.500"></path>
        ${dxyCandles.map(candle(4))}
        ${[[102, 503], [244, 483]].map(([x, y]) => svg`<path d="M${x + 1} ${y}h15q1 0 1 1v16h-3l-5 5-5-5h-4v-16q0-1 1-1z" fill="#f03a5a"></path><text class="cell" x=${x + 9} y=${y + 11}>2</text>`)}
        ${fvg(407, 534, "#c22c4e")}${fvg(430, 536, "#ccc")}${fvg(438, 536, "#aaa", "BPR")}${fvg(430, 555, "#aaa")}${fvg(453, 561, "#18c560")}${fvg(508, 554, "#18c560")}${fvg(511, 549, "#18c560")}${fvg(412, 545, "#a52542")}
        <path d="M45 593h9v10h-4v-6h-5zM57 593h8l-4 10h-4l2.500-6H57z" fill="#eee"></path><circle cx="57.500" cy="595" r="2" fill="#eee"></circle>
        <text class="tiny" x="65" y="603" fill="#3f5c47">how_Sam_</text>
      </g></svg>
      <svg><g transform="translate(-522 -463)">
        ${tick(545, 487, "99.800")}${tick(545, 519, "99.750")}${tick(545, 585, "99.650")}
        ${tag(525, 538, 38, 25, RED, "99.712", "00:34")}
      </g></svg>
      <svg><g transform="translate(-38 -613)">
        ${["20:30", "20:45", "21:00", "21:15", "21:30"].map((s, i) => tick(166 + i * 76, 623, s, i === 2))}
        <rect x="38" y="613" width="105" height="18" fill="#353741"></rect><text class="tag" x="75" y="626">Sun 09 Nov '25</text><text class="tag" x="124" y="626">20:05</text>
      </g></svg>
      <div></div>
      <div class="legend">
        <div class="head"><span class="coin usd">S</span><span class="title">U.S. Dollar Index · 1 · TVC</span><span class="flag"></span><span class="live"></span>
          <span class="ohlc">O<i class="g">99.669</i>H<i class="g">99.694</i>L<i class="g">99.669</i>C<i class="g">99.690</i><i class="g">+0.022 (+0.02%)</i></span></div>
        <div class="chips"><button class="chip">${icon("down", 9, 2.6)}9</button><span class="ring"></span></div>
      </div>
      ${this.currency()}
    </section>`;
  }

  private gold() {
    return html`<section class="pane active">
      <svg><g transform="translate(-573 -122)">
        ${box(573, 122, 1198, 186, "#3a0a0d")}
        ${box(573, 197, 871, 245, "#343536")}
        ${box(573, 268, 871, 273, "#1b2232")}${box(573, 273, 871, 290, "#4b5676")}${box(573, 290, 871, 311, "#4a4f61")}${box(573, 311, 871, 350, "#363a4a")}${box(573, 350, 871, 367, "#434c63")}${box(573, 367, 871, 412, "#505051")}${box(573, 412, 871, 503, "#38383a")}
        ${box(573, 245, 594, 287, "#a02c3c", 0.8)}
        ${box(573, 559, 1198, 612, "#182341")}
        ${box(817, 384, 1198, 430, "#1b402e")}
        ${box(871, 335, 1198, 384, "#18253f")}${box(913, 281, 1073, 335, "#131829")}
        ${box(1019, 122, 1137, 186, "#3a2050")}${box(1019, 186, 1137, 335, "#1a2653")}${box(1019, 281, 1073, 335, "#1a2862")}${box(1019, 335, 1137, 384, "#20397c")}${box(1019, 384, 1137, 430, "#234e70")}${box(1019, 430, 1137, 476, "#192453")}
        ${box(859, 166, 913, 186, "#391c46")}${box(859, 186, 913, 238, "#182248")}${box(859, 238, 913, 328, "#1d3682")}${box(859, 328, 913, 352, "#442c51")}${box(859, 374, 913, 395, "#4a3440")}
        ${box(859, 197, 871, 245, "#7385b0", 0.25)}${box(859, 273, 871, 395, "#8590c0", 0.25)}
        ${box(710, 498, 903, 572, "#0c3029")}${box(711, 498, 721, 571, "#0c6654")}
        ${box(710, 330, 849, 447, "#25a45a")}${box(710, 330, 849, 352, "#2a9d62")}${box(731, 330, 849, 430, "#2cb068", 0.6)}
        ${box(849, 352, 1073, 374, "#1d9f62")}${box(1019, 352, 1073, 374, "#1c9a76")}
        ${vlines([635, 699, 763, 806, 891, 934, 998, 1062, 1126, 1190], 122, 612)}${hlines([154, 181, 208, 236, 263, 290, 317, 344, 371, 399, 453, 507, 534, 562, 589], 573, 1198)}
        <path d="M573 186.500H1198M573 244.500H871" stroke="#a8262c"></path>
        <path d="M573 181.500H1198" stroke="#6b1c20" stroke-opacity=".7"></path>
        <path d="M1045 126.500H1198" stroke="#a58a96"></path>
        <path d="M573 238.500H1198" stroke="#22806e" stroke-opacity=".8"></path>
        <path d="M573 220.500H871" stroke="#777" stroke-dasharray="1 1"></path>
        <path d="M573 278.500H859M573 388.500H710" stroke="#8791ab" stroke-opacity=".7" stroke-dasharray="1 1"></path>
        <path d="M820 405.500H1198M817 430.500H1198" stroke="#6da37c" stroke-opacity=".6"></path>
        <path d="M859 328.500H913" stroke="#a0606a"></path>
        <path d="M710 572.500H903" stroke="#2f9d98"></path><path d="M573 595.500H924" stroke="#42508a" stroke-opacity=".6"></path>
        <path d="M573 606.500H924" stroke="#8d97b8" stroke-dasharray="1 2"></path>
        <path d="M849 352.500H922M849 374.500H922" stroke="#cfe8d8" stroke-dasharray="1 2"></path>
        <path d="M742 291.500H857" stroke="#b32c4c"></path><path d="M765 301.500H855" stroke="#53a58f" stroke-dasharray="4 3"></path>
        <path d="M657 485.500H750" stroke="#5a3a86"></path>
        <circle cx="656.500" cy="485" r="6" fill="#5a3a86" fill-opacity=".8"></circle><circle cx="742" cy="291" r="6" fill="#b32c4c" fill-opacity=".6"></circle><circle cx="635" cy="292" r="2" fill="#b32c4c"></circle>
        ${goldCandles.map(candle(8))}
        <rect x="839" y="352" width="8" height="26" fill="#23d070"></rect>
        <path d="M573 403L603 384 640 391 668 398 678 398 710 419 731 400 746 401 763 395 795 379 806 381 838 380" stroke="#d2d896" fill="none" stroke-opacity=".7"></path>
        <path d="M573 348L603 336 614 350 625 353 646 382 668 398 689 412 710 438 721 415 731 393 746 390 795 358 817 374 838 380 871 320" stroke="#b4c4c4" fill="none" stroke-opacity=".5"></path>
        <path d="M573 510.500L603 505 646 501 690 499 725 497 752 492 834 483 871 476" stroke="#e4e4e4" fill="none"></path>
        <path d="M849.500 122V612" stroke="#aaa" stroke-dasharray="4 3" stroke-opacity=".7"></path>
        <path d="M573 383.500H1184" stroke="#c9cfc9" stroke-opacity=".75" stroke-dasharray="4 3"></path>
        <path d="M834 256h30q2 0 2 2v8q0 2-2 2h-12l-3 4-3-4h-12q-1 0-1-2v-8q0-2 1-2z" fill="#e20a20"></path><text class="sig" x="849" y="265">38.556M</text>
        <text class="bos" x="809" y="289">BOS</text>
        ${fvg(902, 365, "#5cc096")}${fvg(1058, 365, "#3fe0a0")}${fvg(1056, 325, "#4560d8", "#VG")}${fvg(573, 240, "#886", "er")}
        <text class="tiny" x="701" y="582" fill="#1f8a86">17.058M</text><text class="tiny" x="708" y="589" fill="#1f8a86">$</text><text class="tiny" x="664" y="505" fill="#2f8f36">W</text>
        <rect x="573" y="595" width="10" height="12" fill="#17924f"></rect>${fvg(574, 603, "#7fe0a8", "G")}
        <rect x="870" y="591" width="31" height="15" fill="#a3a6ac"></rect><text class="tiny" x="870" y="601" fill="#fff">XOB v1.6.1</text><text class="tiny" x="903" y="603" fill="#9aa3bc">FVG</text>
        <text class="tiny" x="1141" y="603" fill="#4d5978">@Nephew_Sam_</text>
        <rect x="751.500" y="484.500" width="108" height="45" fill="#fff" stroke="#aaa"></rect>
        <text class="memo" x="755" y="497">buy 3972 - 3973</text><text class="memo" x="755" y="511">sl 3969</text><text class="memo" x="755" y="524">tp  4001</text>
        <circle cx="1189.500" cy="383.500" r="7" fill="#0f0f0f"></circle><path d="M1189.500 378a5.500 5.500 0 1 1 0 11a5.500 5.500 0 1 1 0-11M1186 383.500h7M1189.500 380v7" fill="none" stroke="#ddd"></path>
        <path d="M845.500 385q0-1.500 1-1.500t1.200 1.500v4.500l3.500 1q1 .3 1 1.500v2l-1.200 4.500h-5l-3-4.500q-.3-1.800 1-1.500l1.500 1z" fill="#fff" stroke="#333" stroke-width=".8"></path>
      </g></svg>
      <svg><g transform="translate(-1198 -122)">
        ${([[154, "4,022.50"], [181, "4,020.00"], [208, "4,017.50"], [263, "4,012.50"], [290, "4,010.00"], [317, "4,007.50"], [344, "4,005.00"], [371, "4,002.50"], [507, "3,990.00"], [534, "3,987.50"], [562, "3,985.00"], [589, "3,982.50"]] as [number, string][]).map(([y, s]) => tick(1223, y, s))}
        ${tag(1199, 160, 46, 14, "#2a55ee", "4,021.37")}${tag(1199, 231, 46, 25, GREEN, "4,014.82", "08:34")}${tag(1199, 322, 46, 14, "#85868c", "4,006.48")}
        ${tag(1199, 390, 46, 14, "#e0244b", "4,001.05")}${tag(1199, 403, 46, 14, "#ee4562", "4,000.47")}${tag(1199, 416, 46, 14, "#e0244b", "4,000.04")}${tag(1199, 376, 46, 15, "#353741", "4,001.47")}
        ${tag(1199, 430, 46, 14, "#85868c", "3,999.34")}${tag(1199, 443, 46, 14, "#85868c", "3,998.72")}${tag(1199, 456, 46, 14, "#85868c", "3,997.07")}${tag(1199, 469, 46, 14, "#2a55ee", "3,993.01")}
        ${tag(1199, 562, 46, 14, "#2a55ee", "3,984.45")}${tag(1199, 588, 46, 14, "#2a55ee", "3,982.04")}${tag(1199, 600, 46, 14, "#2a55ee", "3,982.04")}
      </g></svg>
      <svg><g transform="translate(-573 -612)">
        ${([[571, "06:00"], [635, "09:00"], [699, "12:00"], [763, "15:00"], [934, "10"], [998, "03:00"], [1062, "06:00"], [1126, "09:00"], [1190, "12:00"]] as [number, string][]).map(([x, s]) => tick(x, 623, s, s === "10"))}
        <rect x="797" y="613" width="105" height="18" fill="#353741"></rect><text class="tag" x="834" y="626">Sun 09 Nov '25</text><text class="tag" x="882" y="626">20:00</text>
      </g></svg>
      <div class="gear">${icon("settings", 11, 2.2)}</div>
      <div class="legend">
        <div class="head"><span class="coin">${this.bars()}</span><span class="title">Gold Spot / U.S. Dollar · 30 · Vantage</span><span class="flag"></span><span class="live"></span>
          <span class="ohlc">O<i class="g">4,000.18</i>H<i class="g">4,011.67</i>L<i class="g">3,997.92</i>C<i class="g">4,008.59</i><i class="g">+7.61 (+0.19%)</i></span></div>
        <div class="chips"><button class="chip">${icon("down", 9, 2.6)}13</button><span class="ring"></span></div>
      </div>
      ${this.currency()}
    </section>`;
  }

  private taskbar() {
    const b = (label: string, body: unknown, cls = "") => html`<button class=${cls} aria-label=${label}>${body}</button>`;
    const g = (inner: unknown) => html`<svg width="18" height="18" viewBox="0 0 18 18" aria-hidden="true">${inner}</svg>`;
    return html`<div class="task">
      <div class="weather"><span class="moon"><svg width="18" height="18" viewBox="0 0 18 18"><path d="M1 10q5 2 9-4 6 2 5 7-3 5-9 3-4-1-5-6z" fill="#f4a73a"></path></svg><span class="badge">2</span></span><span>18°C<br />Despejado</span></div>
      <div class="icons">
        ${b("Inicio", g(svg`<path d="M1 1h7.500v7.500H1zM9.500 1H17v7.500H9.500zM1 9.500h7.500V17H1zM9.500 9.500H17V17H9.500z" fill="#35b5f0"></path>`))}
        <label class="find">${icon("search", 12, 3)}<input placeholder="Buscar" aria-label="Buscar" /><svg width="30" height="16" viewBox="0 0 30 16"><path d="M3 1q4-2 8 0 4-2 8 0 5-2 8 1 3 3 2 8-1 6-7 5-5 2-8 0-6 2-10 0-5-2-4-8 0-4 3-6z" fill="#54307a"></path><path d="M1 7q3-6 9-3-4 4-2 10-6 1-7-7z" fill="#b0407c"></path><path d="M18 3q6-2 9 2-1 5-6 6 0-5-3-8z" fill="#4257b8"></path><path d="M10 5q4-3 8 1 2 4-2 6-5 1-7-2-1-3 1-5z" fill="#d8705f"></path><circle cx="14" cy="8" r="2" fill="#f5b37a"></circle></svg></label>
        ${b("Vista de tareas", g(svg`<rect x="6" y="2" width="11" height="11" fill="#f0f0f0"></rect><rect x="2" y="6" width="10" height="10" fill="#888" fill-opacity=".85"></rect>`))}
        ${b("Copilot", g(svg`<path d="M6 2h6l-4 13H5q-5-2-2-8z" fill="#3aa0e8"></path><path d="M12 3h1q5 1 3 7l-2 5q-3 2-7 1l4-11z" fill="#e85fa0"></path><path d="M2 9h4l2 6-3 1q-4-2-3-7z" fill="#f2b23a"></path>`))}
        ${b("Edge", g(svg`<circle cx="9" cy="9" r="8" fill="#1b86d8"></circle><path d="M1 9q1-8 8-8t8 7q-1 4-6 3 1-5-4-5-4 0-6 3z" fill="#4fd08a"></path><path d="M7 10q1 5 8 4-3 4-7 3-5-2-4-7z" fill="#0f4f9e"></path>`), "run")}
        ${b("Explorador", g(svg`<path d="M1 3h6l2 2h8v11H1z" fill="#f5b92e"></path><path d="M1 7h16v9H1z" fill="#ffd75e"></path><path d="M5 12h8v4H5z" fill="#2d82d6"></path>`))}
        ${b("Tienda", g(svg`<rect x="1" y="4" width="16" height="13" rx="2" fill="#eef3f8"></rect><path d="M6 4V1h6v3" fill="none" stroke="#58a8e0" stroke-width="1.500"></path><path d="M5 7h3v3H5z" fill="#e8502e"></path><path d="M10 7h3v3h-3z" fill="#5cab38"></path><path d="M5 12h3v3H5z" fill="#2f8fe0"></path><path d="M10 12h3v3h-3z" fill="#f0b429"></path>`))}
        ${b("Chrome", html`<svg width="22" height="20" viewBox="0 0 22 20"><g transform="translate(1 2)"><circle cx="9" cy="9" r="8.500" fill="#e33b2e"></circle><path d="M9 9L1.500 5A8.500 8.500 0 0 0 8 17.500z" fill="#2da14c"></path><path d="M9 9l-1 8.500A8.500 8.500 0 0 0 17 6H9z" fill="#fbc116"></path><circle cx="9" cy="9" r="4.200" fill="#fff"></circle><circle cx="9" cy="9" r="3.300" fill="#3b78e7"></circle></g><circle cx="17" cy="5" r="4.500" fill="#1a1a1a"></circle><path d="M15 4h1.500v1H15zM18 4h1.500v1H18zM15.500 7h3" stroke="#ccc" stroke-width=".6" fill="#ccc"></path></svg>`, "lit run")}
        ${b("Teams", g(svg`<circle cx="8" cy="4" r="3" fill="#7b83eb"></circle><circle cx="14" cy="5" r="2" fill="#9aa0f5"></circle><rect x="5" y="7" width="12" height="10" rx="3" fill="#6068d0"></rect><rect x="1" y="8" width="8" height="8" rx="1" fill="#4149b0"></rect><path d="M3 10h4M5 10v4" stroke="#fff"></path>`))}
        ${b("WhatsApp", html`${g(svg`<path d="M1 17l1.500-5A8 8 0 1 1 6 15.500z" fill="#151515" stroke="#35c75a" stroke-width="1.800"></path><path d="M6 5q-2 3 2 6.500t6 1l-2-2-1.500 1Q7.500 10 7 8l1-1.500z" fill="#35c75a"></path>`)}<span class="badge cyan">2</span>`, "run")}
        ${b("Discord", html`${g(svg`<circle cx="9" cy="9" r="8" fill="#5865f2"></circle><path d="M4 12q0-5 2-6.500h6q2 1.500 2 6.500l-2 1-1-1H7l-1 1z" fill="#fff"></path><path d="M6.500 8.500h2v2h-2zM10 8.500h2v2h-2z" fill="#5865f2"></path>`)}<span class="badge">5</span>`, "run")}
        ${b("Steam", g(svg`<circle cx="9" cy="9" r="8" fill="#17305a"></circle><path d="M1 9l6 3 5-6" stroke="#fff" stroke-width="2" fill="none"></path><circle cx="12" cy="6.500" r="3" fill="#fff"></circle><circle cx="12" cy="6.500" r="1.500" fill="#17305a"></circle><circle cx="7" cy="12" r="2" fill="#fff"></circle>`), "run")}
        ${b("Zoom", html`<svg width="18" height="18" viewBox="0 0 18 18"><circle cx="9" cy="9" r="9" fill="#1d5ce0"></circle><text x="2" y="12" font-size="8" fill="#fff">zm</text></svg><span class="badge">12</span>`, "hot run")}
        ${b("MetaTrader", g(svg`<path d="M9 1q5 3 4 8l4 5-4 2-4-1-4 2-4-3 3-4Q3 4 9 1z" fill="#dcae45"></path><circle cx="9" cy="10" r="5" fill="#4fa36c"></circle><text x="6.500" y="13" font-size="8" fill="#fff">S</text>`), "run")}
        ${b("OBS", g(svg`<circle cx="8" cy="10" r="7" fill="#1c1c1c" stroke="#ccc"></circle><path d="M8 10V5M8 10l4 3M8 10l-4 3" stroke="#ccc" stroke-width="1.500"></path><circle cx="15" cy="3" r="3" fill="#e8202c"></circle>`), "run")}
      </div>
      <div class="date">21:21<br />9/11/2025</div>
    </div>`;
  }

  render() {
    const l = (n: string) => html`<button class=${n === "cross" ? "on" : ""} aria-label=${n}>${icon(n, 18, 1.6)}</button>`;
    const r = (n: string, badge = "") => html`<button aria-label=${n}>${icon(n, 19, 1.6)}${badge ? html`<span class="badge">${badge}</span>` : ""}</button>`;
    return html`<div class="window">
      ${this.chrome()}${this.topbar()}
      <div class="main">
        <div class="rail left">
          ${["cross", "trend", "fib", "pattern", "position", "rect", "text", "sticker"].map(l)}<span class="rule"></span>
          ${["ruler", "zoomin"].map(l)}<span class="rule"></span>${["magnet", "penlock", "lock", "eye", "link"].map(l)}<span class="rule"></span>${l("trash")}
          <div class="grow"></div>
          <div class="note"><span><svg width="11" height="11" viewBox="0 0 11 11"><path d="M1 8l6-7 2.500 2L4 9H1zM1 10.500h9" fill="none" stroke="currentColor"></path></svg></span></div>
        </div>
        <div class="centre">
          <div class="charts"><div class="stack">${this.footprint()}${this.dxy()}</div>${this.gold()}</div>
          <div class="ranges">${ranges.map((x) => html`<button>${x}</button>`)}<span class="sep"></span><button aria-label="Go to">${icon("goto", 14, 2)}</button><div class="grow"></div><button class="utc">21:21:26 UTC-3</button><span class="sep"></span><button aria-label="Maximize">${icon("corners", 14, 2)}</button></div>
          <div class="panels"><button>Pine Editor</button><button>Strategy Tester</button><button>Trading Panel</button>
            <div class="shapes drawer"><span class="grip">⠿</span>${["lineshape", "zigzag", "rect", "arrowup", "arrowdown", "arrow", "circle", "poly", "trend", "brush"].map((n) => html`<button aria-label=${n}>${icon(n, 16)}</button>`)}</div>
            <div class="grow"></div><div class="ends"><button aria-label="Open panel">${icon("up", 14, 2)}</button><button aria-label="Maximize panel">${icon("square", 15, 2)}</button></div></div>
        </div>
        <div class="rail right">
          ${r("list")}${r("clock", "1")}${r("layers")}${r("chat", "1")}<div class="grow"></div>
          ${r("target")}${r("ideas")}${r("calendar")}${r("feed", "1")}${r("bell", "15")}
          <button class="apps" aria-label="Apps"><span class="disc"><svg width="13" height="13" viewBox="0 0 13 13"><path d="M1 1h3v3H1zM5 1h3v3H5zM9 1h3v3H9zM1 5h3v3H1zM5 5h3v3H5zM9 5h3v3H9zM1 9h3v3H1zM5 9h3v3H5zM9 9h3v3H9z" fill="#222"></path></svg></span></button>
          <button class="mind" aria-label="Assistant"><span class="disc">${brain}</span></button>
          <button class="helpbtn" aria-label="Help">${icon("help", 18)}</button>
        </div>
      </div>
      ${this.taskbar()}
    </div>`;
  }
}
